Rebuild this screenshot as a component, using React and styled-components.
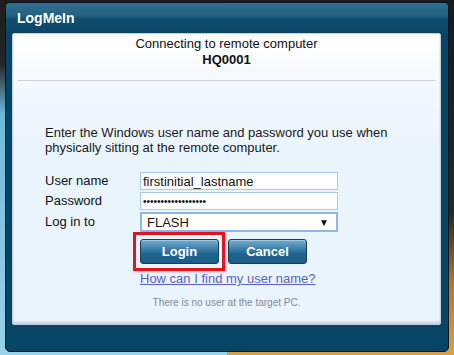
import styled, { createGlobalStyle } from 'styled-components';

const GlobalStyle = createGlobalStyle`
  html, body {
    margin: 0;
    padding: 0;
  }
  body {
    font-family: 'Liberation Sans', Arial, sans-serif;
  }
`;

const Desktop = styled.div`
  width: 454px;
  height: 355px;
  box-sizing: border-box;
  padding: 2px 5px 3px 5px;
  background:
    linear-gradient(180deg, #1c1c1c 0%, #262626 18%, #6fb8d8 32%, #9ad2ea 100%) left / 50% 100% no-repeat,
    linear-gradient(180deg, #1a1a1a 0%, #2a2622 60%, #b07a2a 80%, #d8a040 100%) right / 50% 100% no-repeat;
`;

const Window = styled.div`
  height: 100%;
  box-sizing: border-box;
  display: flex;
  flex-direction: column;
  background: #074465;
  border: 1px solid #0a1520;
  border-radius: 5px;
  overflow: hidden;
`;

const TitleBar = styled.div`
  height: 29px;
  flex: none;
  display: flex;
  align-items: center;
  padding-left: 11px;
  color: #fff;
  font-size: 14px;
  font-weight: bold;
  background: linear-gradient(180deg, #2f7092 0%, #22617f 45%, #0f4d6e 55%, #0a4768 100%);
`;

const Body = styled.div`
  flex: 1;
  padding: 1px 7px 26px 6px;
  display: flex;
`;

const Panel = styled.div`
  flex: 1;
  box-sizing: border-box;
  border: 1px solid #c4d0da;
  border-radius: 2px;
  background: linear-gradient(180deg, #ffffff 0%, #f2f8fe 20%, #eaf4fd 40%, #eaf4fd 100%);
  box-shadow: inset 0 -2px 2px rgba(120, 150, 175, 0.35);
  color: #111;
`;

const Header = styled.div`
  text-align: center;
  padding-top: 2px;
  font-size: 13px;
  line-height: 16px;
`;

const Host = styled.div`
  font-weight: bold;
`;

const Divider = styled.div`
  margin: 12px 4px 0 4px;
  border-top: 1px solid #c8d4de;
`;

const Content = styled.div`
  padding: 0 32px;
  font-size: 13px;
`;

const Instructions = styled.p`
  margin: 44px 0 0 0;
  line-height: 15px;
  color: #1a1a1a;
`;

const Fields = styled.div`
  margin-top: 17px;
  display: grid;
  grid-template-columns: 95px 198px;
  row-gap: 2px;
  align-items: center;
`;

const Label = styled.label`
  line-height: 18px;
  color: #111;
`;

const TextInput = styled.input`
  box-sizing: border-box;
  height: 18px;
  width: 100%;
  margin: 0;
  padding: 0 2px;
  border: 1px solid #a8c9ee;
  background: #fff;
  font-family: 'Liberation Sans', Arial, sans-serif;
  font-size: ${(p) => (p.type === 'password' ? '10px' : '13px')};
  color: #111;
  outline: none;
`;

const Select = styled.div`
  box-sizing: border-box;
  height: 20px;
  display: flex;
  align-items: center;
  justify-content: space-between;
  padding: 0 7px 0 5px;
  border: 2px solid #8fb6e6;
  background: #fff;
  color: #2a0d0d;
`;

const Arrow = styled.span`
  font-size: 10px;
  color: #111;
`;

const Actions = styled.div`
  margin-left: 95px;
`;

const Buttons = styled.div`
  margin-top: 7px;
  display: flex;
  gap: 9px;
`;

const Button = styled.button`
  position: relative;
  width: 79px;
  height: 25px;
  margin: 0;
  padding: 0;
  border: 1px solid #1b3c54;
  border-radius: 3px;
  background: linear-gradient(180deg, #76aed0 0%, #3b7ea8 40%, #1e6490 60%, #1b5d88 100%);
  box-shadow: inset 0 1px 0 rgba(255, 255, 255, 0.35);
  color: #fff;
  font-family: 'Liberation Sans', Arial, sans-serif;
  font-size: 13px;
  font-weight: bold;

  /* red annotation box drawn over the screenshot */
  &::after {
    content: '';
    display: ${(p) => (p.$highlight ? 'block' : 'none')};
    position: absolute;
    inset: -8px -7px -8px -8px;
    border: 3px solid #e3141b;
    box-shadow: 1px 1px 2px rgba(0, 0, 0, 0.25);
    pointer-events: none;
  }
`;

const HelpLink = styled.a`
  display: inline-block;
  margin-top: 7px;
  line-height: 15px;
  color: #5a5fc8;
  text-decoration: underline;
`;

const Note = styled.div`
  margin-top: 11px;
  text-align: center;
  font-size: 10px;
  line-height: 12px;
  color: #7d8c9c;
`;

export default function App() {
  return (
    <>
      <GlobalStyle />
      <Desktop>
        <Window>
          <TitleBar>LogMeIn</TitleBar>
          <Body>
            <Panel>
              <Header>
                <div>Connecting to remote computer</div>
                <Host>HQ0001</Host>
              </Header>
              <Divider />
              <Content>
                <Instructions>
                  Enter the Windows user name and password you use when
                  <br />
                  physically sitting at the remote computer.
                </Instructions>
                <Fields>
                  <Label>User name</Label>
                  <TextInput type="text" defaultValue="firstinitial_lastname" />
                  <Label>Password</Label>
                  <TextInput type="password" defaultValue="xxxxxxxxxxxxxxxxxx" />
                  <Label>Log in to</Label>
                  <Select>
                    <span>FLASH</span>
                    <Arrow>▼</Arrow>
                  </Select>
                </Fields>
                <Actions>
                  <Buttons>
                    <Button $highlight>Login</Button>
                    <Button>Cancel</Button>
                  </Buttons>
                  <HelpLink href="#">How can I find my user name?</HelpLink>
                </Actions>
              </Content>
              <Note>There is no user at the target PC.</Note>
            </Panel>
          </Body>
        </Window>
      </Desktop>
    </>
  );
}
